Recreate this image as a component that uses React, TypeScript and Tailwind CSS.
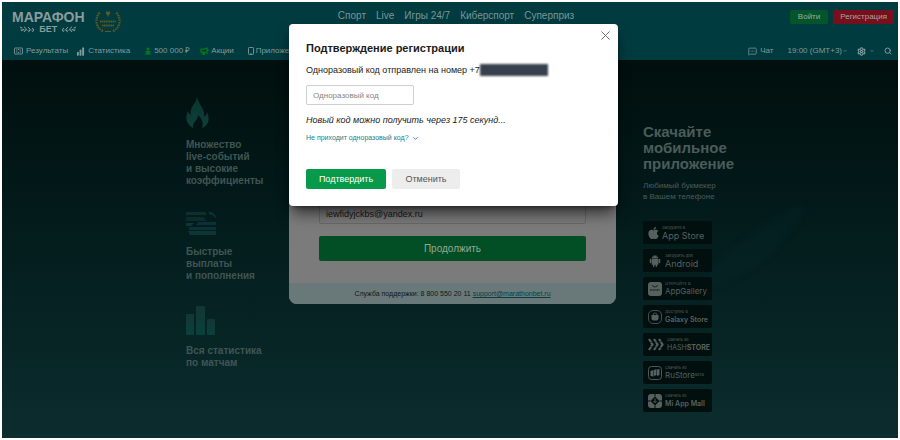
import React, { useState } from 'react';
import {
  ChartNoAxesColumnIncreasing,
  ChevronDown,
  MessageSquareMore,
  Search,
  Settings,
  X,
} from 'lucide-react';
import { AiFillAndroid } from 'react-icons/ai';
import { FaApple } from 'react-icons/fa';

const NAV_ITEMS = ['Спорт', 'Live', 'Игры 24/7', 'Киберспорт', 'Суперприз'];

const LaurelSide = () => (
  <svg width="16" height="7" viewBox="0 0 16 7" fill="none" stroke="currentColor">
    <path d="M1 1l2.500 1.200M2 4.800l3-1.300M5 .8l2.500 2.200L5 6M9 1.200l2.200 2L9.500 6.200M13 2l1.800 1.500-1.300 2.500" strokeWidth="1" />
    <path d="M1 3c4 1 9 2 14 .8" strokeWidth=".5" />
  </svg>
);

const Logo = () => (
  <a href="#" className="flex flex-col items-center text-[#8a9c9d]">
    <span className="text-[14px] leading-[14px] font-bold">МАРАФОН</span>
    <span className="flex items-center gap-1 text-[9px] leading-[10px] font-bold">
      <LaurelSide />
      БЕТ
      <span className="-scale-x-100">
        <LaurelSide />
      </span>
    </span>
  </a>
);

const Award = () => (
  <svg width="30" height="24" viewBox="0 0 30 24" fill="none" stroke="#5d5a20">
    <path d="M10 21C3 18 1 9 7 2" strokeWidth="2.200" strokeDasharray="1.600 .9" />
    <path d="M20 21c7-3 9-12 3-19" strokeWidth="2.200" strokeDasharray="1.600 .9" />
    <path d="M13 2h4l-1 3h-2zM15 5v2" fill="#5d5a20" strokeWidth=".7" />
    <path d="M7 11.500h16" strokeWidth="2" strokeDasharray="1.300 .5" />
    <path d="M9 15.500h12" strokeWidth="2" strokeDasharray="1.300 .5" />
    <path d="M12 21.500h6" strokeWidth="1" />
  </svg>
);

const ResultsIcon = () => (
  <svg width="9" height="8" viewBox="0 0 18 16" fill="none" stroke="currentColor" strokeWidth="1.700">
    <rect x="1" y="2" width="16" height="12" rx="1" />
    <path d="M4 6h3M4 10h3M11 6h3M11 10h3M9 4v2M9 10v2" />
  </svg>
);

const PrizeIcon = () => (
  <svg width="8" height="8" viewBox="0 0 16 16" fill="#087719">
    <circle cx="8" cy="4" r="3" />
    <path d="M2 8h12l-3 3 4 4H1l4-4z" />
  </svg>
);

const PromoIcon = () => (
  <svg width="9" height="8" viewBox="0 0 18 16" fill="none" stroke="#087719" strokeWidth="2.500">
    <path d="M2 4h6l6-2v10l-6-2H2zM5 10l1 5h3l-1-5M16 5v3" />
  </svg>
);

const PhoneIcon = () => (
  <svg width="6" height="8" viewBox="0 0 6 8" fill="none" stroke="currentColor">
    <rect x=".5" y=".5" width="5" height="7" rx=".8" strokeWidth=".9" />
    <path d="M2.200 6.300h1.600" strokeWidth=".7" />
  </svg>
);

const Flame = () => (
  <svg width="24" height="33" viewBox="0 0 24 33">
    <defs>
      <linearGradient id="flame" x1="0" y1="0" x2="0" y2="1">
        <stop offset="0" stopColor="#0b342f" />
        <stop offset="1" stopColor="#0f3f38" />
      </linearGradient>
    </defs>
    <path
      fill="url(#flame)"
      d="M11 0c0 6-5 9-6 14-1 2 0 4 0 5-2-1-3-3-3-4-3 7-2 13 5 17-1-6 5-7 5-13 4 4 6 8 4 13 7-3 8-9 5-16 0 2-1 4-3 4C19 12 12 8 11 0z"
    />
  </svg>
);

const Cards = () => (
  <svg width="31" height="25" viewBox="0 0 31 25">
    <path fill="#0d302e" d="M1 1h18l2 3H0V2zM22 1h4l4 4v2l-4-3h-2z" />
    <path fill="#0b2c2a" d="M1 6h17l2 4H0V7z" />
    <path fill="#0a3039" d="M12 11h18v3H10zM3 16h27v3H3z" />
    <path fill="#0d3634" d="M0 12h8l-3 3H0zM2 20h28v4H4z" />
  </svg>
);

const Bars = () => (
  <svg width="30" height="29" viewBox="0 0 30 29">
    <defs>
      <linearGradient id="bars" x1="0" y1="0" x2="0" y2="1">
        <stop offset="0" stopColor="#143633" />
        <stop offset="1" stopColor="#09413c" />
      </linearGradient>
    </defs>
    <rect x="0" y="8" width="8" height="21" rx="1" fill="url(#bars)" />
    <rect x="10" y="0" width="9" height="29" rx="1" fill="url(#bars)" />
    <rect x="21" y="13" width="8" height="16" rx="1" fill="url(#bars)" />
  </svg>
);

const GalleryIcon = () => (
  <svg width="14" height="14" viewBox="0 0 14 14">
    <rect width="14" height="14" rx="3" fill="currentColor" />
    <path d="M4.500 3a2.500 2 0 0 0 5 0" fill="none" stroke="#010f0f" strokeWidth=".7" />
    <path d="M2 8h10" stroke="#010f0f" strokeWidth="1" strokeDasharray="1 .4" />
  </svg>
);

const GalaxyIcon = () => (
  <svg width="14" height="14" viewBox="0 0 14 14">
    <rect x=".5" y=".5" width="13" height="13" rx="4.500" fill="none" stroke="currentColor" strokeWidth=".8" />
    <path d="M3.500 5h7v3.500a2 2 0 0 1-2 2h-3a2 2 0 0 1-2-2z" fill="currentColor" />
    <path d="M5 5a2 2 0 0 1 4 0" fill="none" stroke="currentColor" strokeWidth=".8" />
  </svg>
);

const HashIcon = () => (
  <svg width="16" height="13" viewBox="0 0 16 13" fill="none" stroke="currentColor" strokeWidth="2.200">
    <path d="M1 1l3.500 5.500L1 12M6 1l3.500 5.500L6 12M11 1l3.500 5.500L11 12" />
    <path d="M0 4.500l15-1M0 8.500l15 1" stroke="#010f0f" strokeWidth=".5" />
  </svg>
);

const RuStoreIcon = () => (
  <svg width="14" height="14" viewBox="0 0 14 14">
    <rect x=".5" y=".5" width="13" height="13" rx="3" fill="none" stroke="currentColor" strokeWidth=".9" />
    <path d="M2.500 5l3-1v6.500l-3-.5zM6 4l2.500-1v6L6 10zM9 3.500l2.500-.5v6L9 10z" fill="currentColor" />
  </svg>
);

const MiIcon = () => (
  <svg width="14" height="14" viewBox="0 0 14 14">
    <rect width="14" height="14" rx="3" fill="currentColor" />
    <path d="M7 2.500L11.500 7 7 11.500 2.500 7z" fill="#010f0f" />
    <path d="M7 0v2.500M14 7h-2.500M7 14v-2.500M0 7h2.500" stroke="#010f0f" strokeWidth="1" />
    <path d="M7 4.500v4M5.500 7L7 8.700 8.500 7" fill="none" stroke="currentColor" strokeWidth=".9" />
  </svg>
);

const FEATURES = [
  {
    id: 'odds',
    icon: <Flame />,
    lines: ['Множество', 'live-событий', 'и высокие', 'коэффициенты'],
  },
  {
    id: 'payouts',
    icon: <Cards />,
    lines: ['Быстрые', 'выплаты', 'и пополнения'],
  },
  {
    id: 'stats',
    icon: <Bars />,
    lines: ['Вся статистика', 'по матчам'],
  },
];

const STORES = [
  {
    id: 'apple',
    icon: <FaApple className="h-3.5 w-[11px]" />,
    caption: 'Загрузите в',
    name: 'App Store',
    nameClass: 'text-[9px]',
  },
  {
    id: 'android',
    icon: <AiFillAndroid className="h-3.5 w-3.5" />,
    caption: 'Загрузить для',
    name: 'Android',
    nameClass: 'text-[9px]',
  },
  {
    id: 'gallery',
    icon: <GalleryIcon />,
    caption: 'ОТКРОЙТЕ В',
    name: 'AppGallery',
    nameClass: 'text-[8px]',
  },
  {
    id: 'galaxy',
    icon: <GalaxyIcon />,
    caption: 'Доступно в',
    name: 'Galaxy Store',
    nameClass: 'text-[7px] font-semibold',
  },
  {
    id: 'hash',
    icon: <HashIcon />,
    caption: 'Скачать из',
    name: (
      <>
        HASH<b>STORE</b>
      </>
    ),
    nameClass: 'text-[7px]',
  },
  {
    id: 'rustore',
    icon: <RuStoreIcon />,
    caption: 'Скачать из',
    name: (
      <>
        RuStore<sup className="text-[4px]">бета</sup>
      </>
    ),
    nameClass: 'text-[8px]',
  },
  {
    id: 'mi',
    icon: <MiIcon />,
    caption: 'Скачать из',
    name: 'Mi App Mall',
    nameClass: 'text-[7px] font-semibold',
  },
];

const Header = () => (
  <header className="bg-[#003b40] pl-2.5 pr-1 h-[58px] flex flex-col justify-between">
    <div className="grid grid-cols-[1fr_auto_1fr] items-start pt-2">
      <div className="flex items-start gap-2">
        <Logo />
        <Award />
      </div>
      <nav className="flex gap-2.5 pl-1.5 text-[10px] leading-3 text-[#7d9496]">
        {NAV_ITEMS.map((item) => (
          <a key={item} href="#">
            {item}
          </a>
        ))}
      </nav>
      <div className="flex justify-end gap-[5px] text-[8px] leading-[14px] text-[#a0a8a2]">
        <button className="rounded-xs bg-[#04552a] px-2">Войти</button>
        <button className="rounded-xs bg-[#780f1c] px-[7px]">Регистрация</button>
      </div>
    </div>
    <div className="flex items-center justify-between pb-1 pl-0.5 pr-0.5 text-[8px] leading-[10px] text-[#829a9c]">
      <div className="flex items-center">
        <a href="#" className="flex items-center gap-[3px]">
          <ResultsIcon />
          Результаты
        </a>
        <a href="#" className="ml-2 flex items-center gap-[3px]">
          <ChartNoAxesColumnIncreasing size={9} strokeWidth={5} />
          Статистика
        </a>
        <a href="#" className="ml-3.5 flex items-center gap-0.5">
          <PrizeIcon />
          500 000 ₽
        </a>
        <a href="#" className="ml-2.5 flex items-center gap-0.5">
          <PromoIcon />
          Акции
        </a>
        <a href="#" className="ml-3.5 flex items-center gap-0.5">
          <PhoneIcon />
          Приложения
        </a>
      </div>
      <div className="flex items-center">
        <a href="#" className="flex items-center gap-[3px]">
          <MessageSquareMore size={9} />
          Чат
        </a>
        <button className="ml-3.5 flex items-center gap-px">
          19:00 (GMT+3)
          <ChevronDown size={4} strokeWidth={4} />
        </button>
        <button aria-label="Настройки" className="ml-2.5 flex items-center gap-1">
          <Settings size={9} strokeWidth={3} />
          <ChevronDown size={4} strokeWidth={4} />
        </button>
        <button aria-label="Поиск" className="ml-2.5">
          <Search size={8} strokeWidth={3} />
        </button>
      </div>
    </div>
  </header>
);

const RegistrationCard = () => {
  const [email, setEmail] = useState('iewfidyjckbs@yandex.ru');

  return (
    <section className="mt-12 flex w-[327px] shrink-0 flex-col self-start overflow-hidden rounded-lg bg-[#7b7b7b]">
      <div className="px-[30px] pt-24 pb-[22px]">
        <input
          type="email"
          aria-label="Электронная почта"
          value={email}
          onChange={(e) => setEmail(e.target.value)}
          className="block h-5 w-full rounded-xs border border-[#686868] px-1.5 text-[9px] text-[#161616]"
        />
        <button className="mt-3 block w-full rounded-xs bg-[#024f26] text-[10px] leading-[25px] text-[#93a899]">
          Продолжить
        </button>
      </div>
      <p className="bg-[#697979] text-center text-[7px] leading-[21px] text-[#101818]">
        Служба поддержки: 8 800 550 20 11{' '}
        <a href="#" className="text-[#063f48] underline">
          support@marathonbet.ru
        </a>
      </p>
    </section>
  );
};

const ConfirmDialog = () => {
  const [code, setCode] = useState('');

  return (
    <div className="absolute inset-x-0 top-[22px] flex justify-center pl-[7px]">
      <div
        role="dialog"
        aria-labelledby="dialog-title"
        className="w-[329px] rounded bg-white px-[17px] pb-[17px] text-[#1b1b1b] shadow-lg shadow-black/60"
      >
        <div className="flex items-start justify-between">
          <h2 id="dialog-title" className="pt-4 text-[11px] leading-4 font-bold">
            Подтверждение регистрации
          </h2>
          <button aria-label="Закрыть" className="-mr-3 pt-1 text-[#666]">
            <X size={15} strokeWidth={1.5} />
          </button>
        </div>
        <p className="mt-2 flex items-center text-[9px] leading-3">
          Одноразовый код отправлен на номер +7
          <span className="h-3 w-[68px] bg-[#37414d] blur-[1px]" />
        </p>
        <input
          type="text"
          aria-label="Одноразовый код"
          placeholder="Одноразовый код"
          value={code}
          onChange={(e) => setCode(e.target.value)}
          className="mt-[9px] block h-5 w-[108px] rounded-xs border border-[#cfcfcf] px-1.5 text-[8px] placeholder:text-[#858585]"
        />
        <p className="mt-[9px] text-[9px] leading-3 italic">
          Новый код можно получить через 175 секунд...
        </p>
        <button className="mt-[7px] flex items-center gap-[3px] text-[7px] leading-[10px] text-[#22808a]">
          Не приходит одноразовый код?
          <ChevronDown size={7} strokeWidth={3} />
        </button>
        <div className="mt-[26px] flex gap-1.5 text-[9px] leading-5">
          <button className="w-20 rounded-xs bg-[#079a4b] text-white">Подтвердить</button>
          <button className="w-[68px] rounded-xs bg-[#ededed] text-[#555]">Отменить</button>
        </div>
      </div>
    </div>
  );
};

export default function App() {
  return (
    <div className="bg-white p-0.5 font-['Liberation_Sans',sans-serif]">
      <div className="relative overflow-hidden bg-linear-to-b from-[#000b0a] to-[#0c2d2e]">
        <svg
          className="absolute top-50 right-20 blur-[3px]"
          width="130"
          height="110"
          viewBox="0 0 130 110"
          fill="#0b3a42"
          fillOpacity=".1"
        >
          <path d="M0 104C20 60 70 20 116 2c-6 34-50 66-76 76C24 84 10 92 0 104z" />
        </svg>
        <Header />
        <main className="flex min-h-[378px] justify-center pl-5">
          <ul className="w-[103px] shrink-0 pt-9 text-[10px] leading-3 font-bold text-[#3f5553]">
            {FEATURES.map((feature) => (
              <li key={feature.id} className="pb-6">
                {feature.icon}
                <p className="pt-2.5">
                  {feature.lines.map((line) => (
                    <span key={line} className="block">
                      {line}
                    </span>
                  ))}
                </p>
              </li>
            ))}
          </ul>
          <RegistrationCard />
          <aside className="relative ml-[27px] w-[91px] shrink-0 pt-16 text-[#4a5c5a]">
            <h2 className="text-[15px] leading-4 font-bold">
              Скачайте мобильное приложение
            </h2>
            <p className="mt-2 text-[8px] leading-[11px] whitespace-nowrap">
              Любимый букмекер
              <br />
              в Вашем телефоне
            </p>
            <ul className="mt-[19px] flex flex-col gap-[5px]">
              {STORES.map((store) => (
                <li key={store.id}>
                  <a
                    href="#"
                    className="flex h-[23px] w-[69px] items-center gap-[3px] rounded-xs bg-[#010f0f] pl-[5px] text-[#56615f]"
                  >
                    <span className="shrink-0">{store.icon}</span>
                    <span className="flex flex-col font-['Inter','Noto_Sans',sans-serif] whitespace-nowrap">
                      <span className="text-[4px] leading-[5px]">{store.caption}</span>
                      <span className={`leading-[11px] ${store.nameClass}`}>{store.name}</span>
                    </span>
                  </a>
                </li>
              ))}
            </ul>
          </aside>
        </main>
        <ConfirmDialog />
      </div>
    </div>
  );
}
